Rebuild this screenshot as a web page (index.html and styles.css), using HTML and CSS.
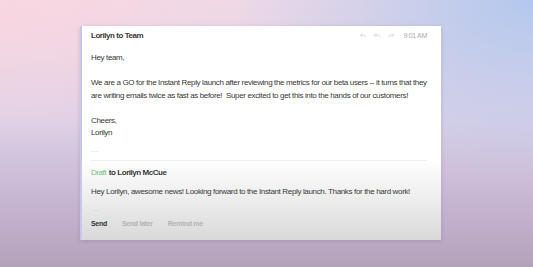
FILE: index.html
```html
<!DOCTYPE html>
<html>
<head>
    <meta charset="UTF-8">
    <title>Instant Reply</title>
    <link rel="stylesheet" href="styles.css">
</head>
<body>
    <div class="mail-card">
        <div class="mail-head">
            <span class="mail-from">Lorilyn to Team</span>
            <div class="mail-meta">
                <svg class="mail-icon" viewBox="0 0 10 10"><path d="M4 2 L1.5 4.5 L4 7 M1.5 4.5 H6 Q8.5 4.5 8.5 7.5"/></svg>
                <svg class="mail-icon" viewBox="0 0 12 10"><path d="M3.5 2 L1 4.5 L3.5 7 M6 2 L3.5 4.5 L6 7 M3.5 4.5 H8 Q10.5 4.5 10.5 7.5"/></svg>
                <svg class="mail-icon" viewBox="0 0 10 10"><path d="M6 2 L8.5 4.5 L6 7 M8.5 4.5 H4 Q1.5 4.5 1.5 7.5"/></svg>
                <span class="mail-time">9:01 AM</span>
            </div>
        </div>
        <div class="mail-body">
            <p>Hey team,</p>
            <p>We are a GO for the Instant Reply launch after reviewing the metrics for our beta users -- it turns that they<br>are writing emails twice as fast as before!&nbsp; Super excited to get this into the hands of our customers!</p>
            <p>Cheers,<br>Lorilyn</p>
        </div>
        <div class="mail-dots">...</div>
        <div class="reply">
            <div class="reply-head"><span class="draft">Draft</span> to Lorilyn McCue</div>
            <div class="reply-text">Hey Lorilyn, awesome news! Looking forward to the Instant Reply launch. Thanks for the hard work!</div>
            <div class="mail-dots">...</div>
            <div class="reply-actions">
                <span class="send">Send</span>
                <span class="muted">Send later</span>
                <span class="muted">Remind me</span>
            </div>
        </div>
    </div>
</body>
</html>
```

FILE: styles.css
```css
body {
    margin: 0;
    width: 533px;
    height: 267px;
    overflow: hidden;
    font-family: "Liberation Sans", Arial, sans-serif;
    color: #383838;
    background:
        radial-gradient(ellipse 260px 150px at 0% 0%, rgba(250, 214, 224, 0.9), rgba(250, 214, 224, 0) 100%),
        radial-gradient(ellipse 300px 180px at 100% 0%, rgba(178, 200, 238, 1), rgba(178, 200, 238, 0) 100%),
        linear-gradient(180deg, #efd9e6 0%, #dcd0e6 45%, #c7b6d3 75%, #b4a2bb 100%);
}

.mail-card {
    margin: 26px 0 0 80px;
    width: 361px;
    height: 214px;
    box-sizing: border-box;
    padding: 0 14px 0 9px;
    border-left: 2px solid #c9c6ee;
    background: linear-gradient(180deg, #fff 0%, #fff 62%, #f0f0f0 78%, #d9d9d9 100%);
    box-shadow: 0 1px 4px rgba(60, 40, 80, 0.18);
    display: flex;
    flex-direction: column;
    font-size: 8px;
    letter-spacing: -0.35px;
    white-space: nowrap;
}

.mail-head {
    display: flex;
    justify-content: space-between;
    align-items: center;
    height: 12px;
    margin-top: 3px;
}

.mail-from {
    font-weight: bold;
    letter-spacing: -0.45px;
}

.mail-meta {
    display: flex;
    align-items: center;
    gap: 6px;
}

.mail-icon {
    width: 8px;
    height: 7px;
    fill: none;
    stroke: #c4c4c4;
    stroke-width: 0.9;
}

.mail-time {
    color: #aaa;
    margin-left: 2px;
    font-size: 7px;
    letter-spacing: -0.3px;
}

.mail-body {
    margin-top: 11px;
    line-height: 12.5px;
}

.mail-body p {
    margin: 0 0 12.5px;
}

.mail-body p:last-child {
    margin-bottom: 0;
}

.mail-dots {
    color: #c4c4c4;
    font-size: 7px;
    line-height: 8px;
    margin-top: 6px;
    letter-spacing: 0.5px;
}

.reply {
    border-top: 1px solid #eeeeee;
    margin-top: 6px;
}

.reply-head {
    margin-top: 6px;
    line-height: 12px;
    font-weight: bold;
    letter-spacing: -0.45px;
}

.draft {
    color: #6cc17d;
    font-weight: normal;
    margin-right: 1px;
}

.reply-text {
    margin-top: 7px;
    line-height: 12px;
}

.reply .mail-dots {
    margin-top: 7px;
}

.reply-actions {
    display: flex;
    gap: 15px;
    margin-top: 6px;
    line-height: 10px;
    font-size: 7px;
    font-weight: bold;
    letter-spacing: -0.3px;
}

.send {
    color: #333;
}

.muted {
    color: #b3b3b3;
}
```
